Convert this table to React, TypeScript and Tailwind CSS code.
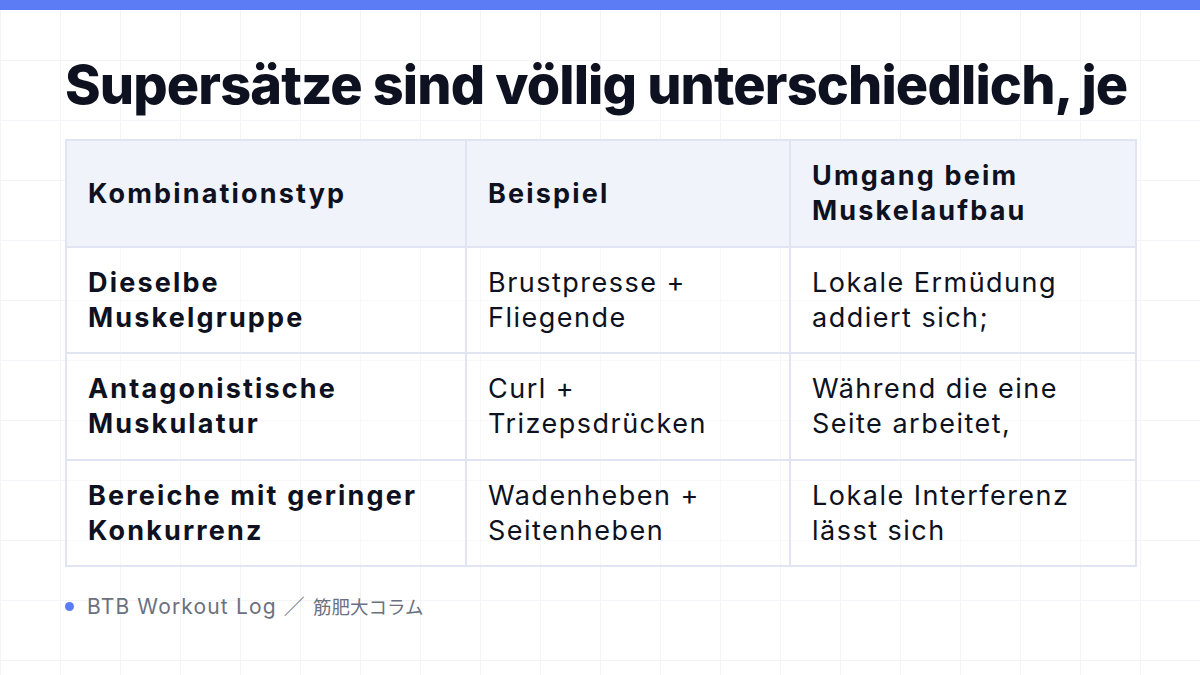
import React from "react";

const rows = [
  ["Dieselbe Muskelgruppe", "Brustpresse + Fliegende", "Lokale Ermüdung addiert sich;"],
  ["Antagonistische Muskulatur", "Curl + Trizepsdrücken", "Während die eine Seite arbeitet,"],
  ["Bereiche mit geringer Konkurrenz", "Wadenheben + Seitenheben", "Lokale Interferenz lässt sich"],
];

const cell = "border-2 border-[#e1e4f1] pl-[21px] pr-[24px] py-[17.25px] text-left align-middle";
const bold = "font-bold tracking-[0.08em]";

export default function App() {
  return (
    <div
      className="w-[1200px] h-[675px] overflow-hidden bg-white flex flex-col bg-[linear-gradient(to_right,#f3f4f8_1px,transparent_1px),linear-gradient(to_bottom,#f3f4f8_1px,transparent_1px)] bg-[size:60px_60px]"
      style={{ fontFamily: "Inter, 'Noto Sans CJK JP', sans-serif" }}
    >
      <div className="h-[10px] bg-[#5b7cf5] shrink-0" />
      <div className="px-[65px] flex flex-col">
        <h1 className="mt-[43px] text-[54px] leading-[64px] font-extrabold tracking-[-0.016em] text-[#0e1120] whitespace-nowrap">
          Supersätze sind völlig unterschiedlich, je
        </h1>
        <table className="mt-[22px] w-[1070px] border-collapse table-fixed text-[27px] leading-[35px] tracking-[0.055em] text-[#0e1120]">
          <colgroup>
            <col className="w-[400px]" />
            <col className="w-[324px]" />
            <col className="w-[346px]" />
          </colgroup>
          <thead>
            <tr className="bg-[#f1f3fb]">
              <th className={`${cell} ${bold}`}>Kombinationstyp</th>
              <th className={`${cell} ${bold}`}>Beispiel</th>
              <th className={`${cell} ${bold}`}>Umgang beim Muskelaufbau</th>
            </tr>
          </thead>
          <tbody>
            {rows.map((r, i) => (
              <tr key={i} className="bg-white/40">
                <td className={`${cell} ${bold}`}>{r[0]}</td>
                <td className={cell}>{r[1]}</td>
                <td className={cell}>{r[2]}</td>
              </tr>
            ))}
          </tbody>
        </table>
        <div className="mt-[24px] flex items-center gap-[13px] text-[21px] tracking-[0.055em] text-[#6b7080]">
          <span className="w-[9px] h-[9px] rounded-full bg-[#5b7cf5] shrink-0" />
          <span>
            BTB Workout Log ／ <span className="text-[18.5px] tracking-normal">筋肥大コラム</span>
          </span>
        </div>
      </div>
    </div>
  );
}
